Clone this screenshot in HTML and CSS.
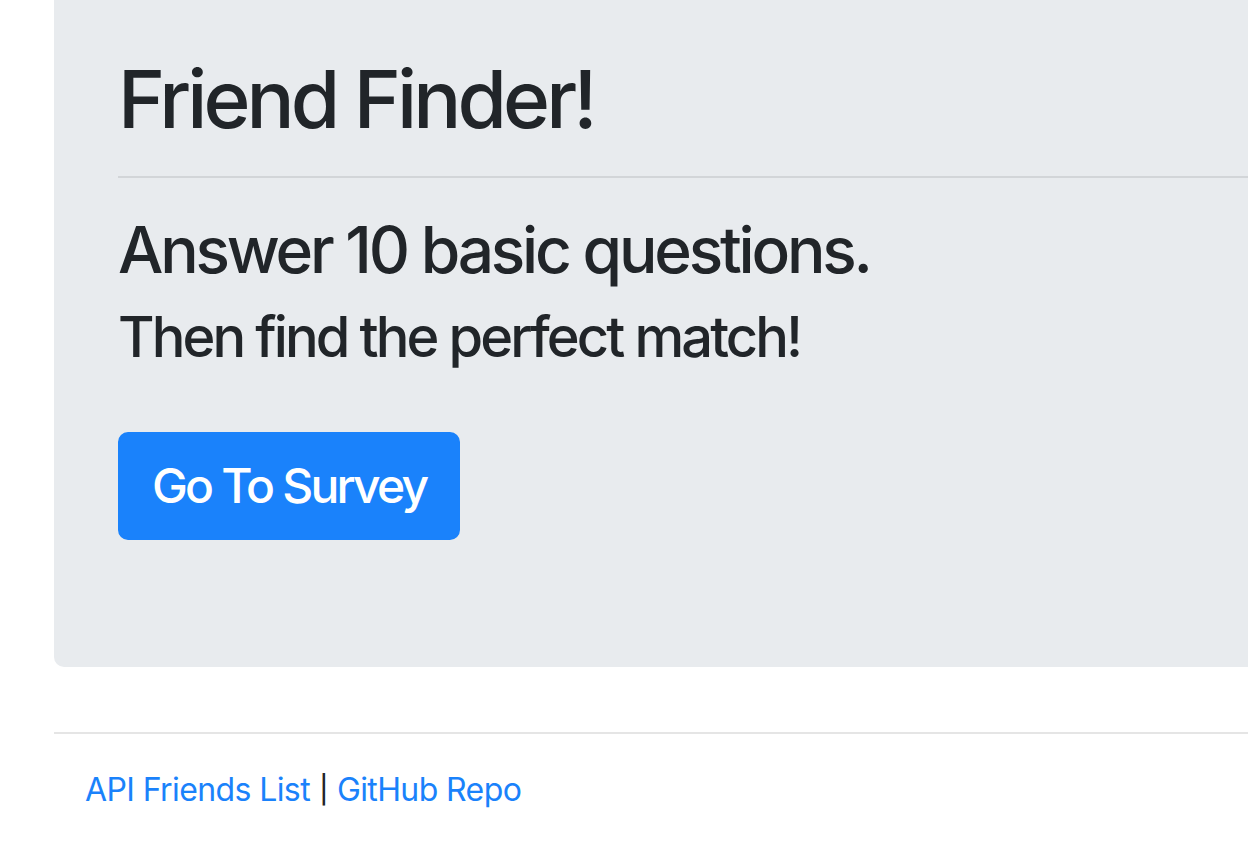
FILE: index.html
```html
<!DOCTYPE html>
<html lang="en">
<head>
<meta charset="utf-8">
<title>Friend Finder</title>
<link rel="stylesheet" href="styles.css">
</head>
<body>
<div class="page">
  <section class="jumbotron">
    <h1 class="title">Friend Finder!</h1>
    <hr class="divider">
    <h2 class="lead-1">Answer 10 basic questions.</h2>
    <h3 class="lead-2">Then find the perfect match!</h3>
    <div class="actions">
      <a class="btn" href="#">Go To Survey</a>
    </div>
  </section>
  <footer class="footer">
    <hr class="footer-rule">
    <p class="footer-links"><a href="#">API Friends List</a> <span class="sep">|</span> <a href="#">GitHub Repo</a></p>
  </footer>
</div>
</body>
</html>
```

FILE: styles.css
```css
html, body {
  margin: 0;
  padding: 0;
  background: #ffffff;
}

body {
  font-family: Inter, "Liberation Sans", Arial, sans-serif;
  color: #212529;
}

.page {
  padding-left: 54px;
  overflow: hidden;
}

.jumbotron {
  background: #e8ebee;
  border-radius: 0 0 0 10px;
  padding: 51px 0 127px 64px;
}

.title {
  margin: 0 0 29px;
  font-size: 80px;
  line-height: 96px;
  font-weight: 500;
  letter-spacing: -3.9px;
}

.divider {
  margin: 0 0 33px;
  border: 0;
  height: 2px;
  background: #d2d5d8;
}

.lead-1 {
  margin: 0 0 16px;
  font-size: 64px;
  line-height: 77px;
  font-weight: 500;
  letter-spacing: -3.2px;
}

.lead-2 {
  margin: 0;
  font-size: 56px;
  line-height: 67px;
  font-weight: 500;
  letter-spacing: -2.9px;
}

.actions {
  margin-top: 61px;
  display: flex;
}

.btn {
  display: inline-block;
  background: #1a82fb;
  color: #ffffff;
  text-decoration: none;
  font-size: 48px;
  line-height: 72px;
  padding: 16px 32px;
  border: 2px solid #1a82fb;
  border-radius: 10px;
  font-weight: 500;
  letter-spacing: -2.8px;
}

.footer {
  padding-top: 65px;
}

.footer-rule {
  margin: 0;
  border: 0;
  height: 2px;
  background: #e5e5e5;
}

.footer-links {
  margin: 32px 0 0 31px;
  font-size: 32px;
  line-height: 48px;
  letter-spacing: -0.6px;
}

.sep {
  display: inline-block;
  transform: scaleY(0.85);
}

.footer-links a {
  color: #1a82fb;
  text-decoration: none;
}
```
